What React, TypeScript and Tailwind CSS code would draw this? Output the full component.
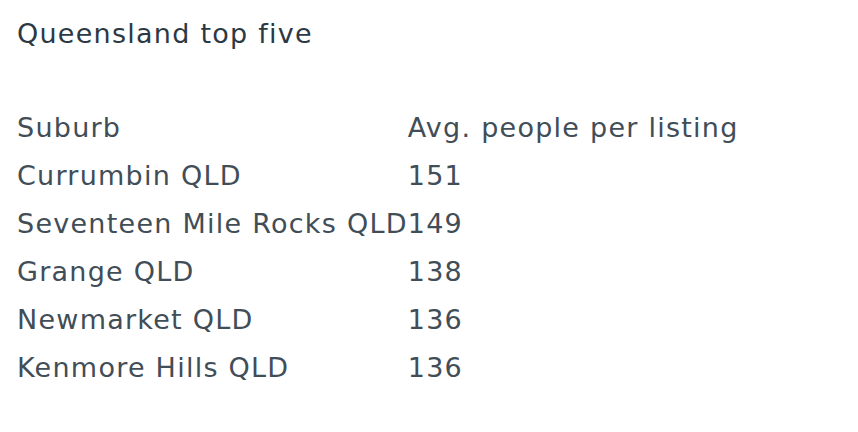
import React from "react";

const rows: [string, string][] = [
  ["Currumbin QLD", "151"],
  ["Seventeen Mile Rocks QLD", "149"],
  ["Grange QLD", "138"],
  ["Newmarket QLD", "136"],
  ["Kenmore Hills QLD", "136"],
];

export default function App() {
  return (
    <div className="w-[858px] h-[432px] bg-white px-[17px] pt-[14px] text-[#414d57] font-['DejaVu_Sans',sans-serif]">
      <h2 className="text-[27px] leading-[40px] font-normal tracking-[1.25px] text-[#2c3944]">Queensland top five</h2>
      <table className="mt-[50px] border-collapse text-[27px] leading-[48px] font-normal tracking-[1.25px]">
        <thead>
          <tr>
            <th className="text-left font-normal p-0">Suburb</th>
            <th className="text-left font-normal p-0">Avg. people per listing</th>
          </tr>
        </thead>
        <tbody>
          {rows.map(([s, n]) => (
            <tr key={s}>
              <td className="p-0">{s}</td>
              <td className="p-0">{n}</td>
            </tr>
          ))}
        </tbody>
      </table>
    </div>
  );
}
